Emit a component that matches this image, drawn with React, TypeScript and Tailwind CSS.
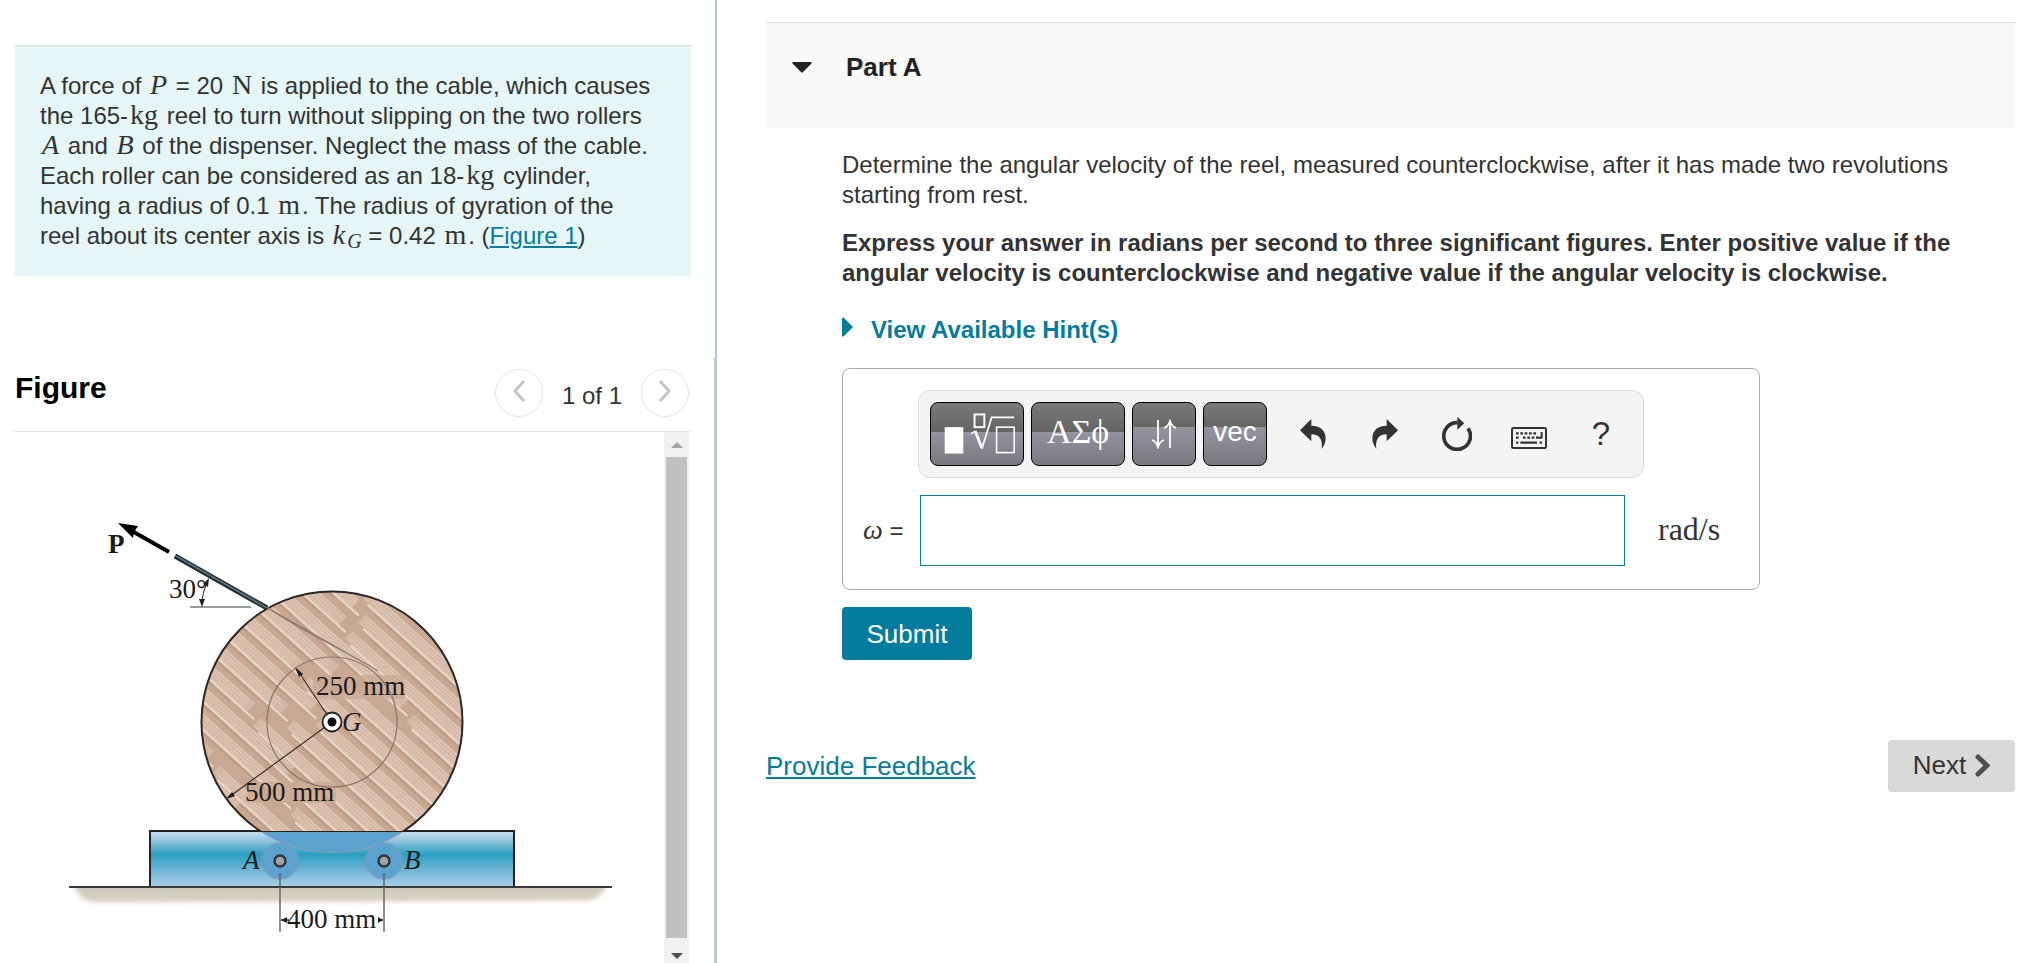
import React from "react";

const serif = "font-['Liberation_Serif',serif]";

function MathText({ children, italic = false }: { children: React.ReactNode; italic?: boolean }) {
  return (
    <span className={`${serif} mx-0.5 text-[28px] leading-none ${italic ? "italic" : ""}`}>{children}</span>
  );
}

type Stripe = { y: number; x1: number; x2: number; w: number; color: string };

function buildStripes(): Stripe[] {
  const stripes: Stripe[] = [];
  let seed = 29;
  const rand = () => {
    seed = (seed * 16807) % 2147483647;
    return seed / 2147483647;
  };
  const addBand = (y: number, start: number, end: number) => {
    stripes.push({ y: y + 5, x1: start, x2: end, w: 11, color: "#d5b8a5" });
    for (let k = 1; k < 11; k += 3) {
      const shift = rand() * 14;
      stripes.push({ y: y + k, x1: start + shift, x2: end - shift, w: 1, color: "#e0c9b9" });
    }
    stripes.push({ y: y + 12, x1: start + 8, x2: end + 10, w: 2, color: "#ecdacd" });
    stripes.push({ y: y + 15, x1: start + 20, x2: end - 20, w: 1, color: "#b5947d" });
  };
  for (let y = -130; y < 132; y += 21) {
    const split = -60 + rand() * 120;
    addBand(y, -150, split - 14);
    addBand(y + 7, split, 150);
  }
  return stripes;
}

const stripes = buildStripes();

function ReelFigure() {
  return (
    <svg viewBox="15 432 649 531" className="block w-full" role="img" aria-label="Cable reel on two rollers">
      <defs>
        <linearGradient id="base" x1="0" y1="0" x2="0" y2="1">
          <stop offset="0" stopColor="#c9dff0" />
          <stop offset="0.15" stopColor="#9cc8e0" />
          <stop offset="0.42" stopColor="#2ba0c2" />
          <stop offset="0.7" stopColor="#6fb4d5" />
          <stop offset="1" stopColor="#a9cfe8" />
        </linearGradient>
        <linearGradient id="ground" x1="0" y1="0" x2="0" y2="1">
          <stop offset="0" stopColor="#cbc7b7" />
          <stop offset="0.8" stopColor="#d3cfc0" />
          <stop offset="1" stopColor="#e8e6de" />
        </linearGradient>
        <filter id="soft" x="-5%" y="-50%" width="110%" height="200%">
          <feGaussianBlur stdDeviation="2" />
        </filter>
        <clipPath id="below">
          <rect x="60" y="887" width="570" height="30" />
        </clipPath>
        <clipPath id="disc">
          <circle cx="332" cy="722" r="131" />
        </clipPath>
        <clipPath id="above">
          <rect x="190" y="580" width="290" height="251" />
        </clipPath>
      </defs>

      <g clipPath="url(#below)">
        <path
          d="M72 880 H609 C604 894 596 902 580 901 L100 903 C84 904 78 896 72 880 Z"
          fill="url(#ground)"
          filter="url(#soft)"
        />
      </g>
      <rect x="150" y="831" width="364" height="56" fill="url(#base)" stroke="#222" strokeWidth="2" />
      <path d="M69 887 H612" stroke="#3a3a3a" strokeWidth="2" />

      <path d="M260 831 A131 131 0 0 0 404 831 Z" fill="#5ba3ce" stroke="#8e9bb0" strokeWidth="1" />
      {[280, 384].map((x) => (
        <g key={x}>
          <circle cx={x} cy="861" r="18" fill="#5ba3ce" stroke="#8498b4" strokeWidth="1" />
          <circle cx={x} cy="861" r="5.5" fill="#a3a3a6" stroke="#33333a" strokeWidth="2.4" />
          <path d={`M${x} 873 V932`} stroke="#555" strokeWidth="1.3" />
        </g>
      ))}
      <path d="M150 831 H514" stroke="#222" strokeWidth="2" />

      <g clipPath="url(#above)">
        <circle cx="332" cy="722" r="131" fill="#c9a892" />
        <g clipPath="url(#disc)">
          <g transform="translate(332 722) rotate(42)">
            {stripes.map((s, i) => (
              <path key={i} d={`M${s.x1} ${s.y} H${s.x2}`} stroke={s.color} strokeWidth={s.w} />
            ))}
          </g>
          <path d="M313 675 h92 v24 h-92 z M248 782 h88 v21 h-88 z" fill="#caa993" opacity="0.75" />
        </g>
        <circle cx="332" cy="722" r="130.5" fill="none" stroke="#2c2725" strokeWidth="2" />
      </g>
      <circle cx="332" cy="722" r="65" fill="none" stroke="#8b7667" strokeWidth="1.2" />
      <path d="M268 608 L366 664 M268 608 C300 630 340 648 378 671" stroke="#8b7d6c" strokeWidth="1.2" fill="none" />

      <path d="M332 722 L298 671 M332 722 L229 797" stroke="#3b302b" strokeWidth="1.2" />
      <path d="M295 667 L303 674 L299 677 Z M226 799 L232 792 L235 796 Z" fill="#1d1816" />
      <circle cx="332" cy="722" r="9.5" fill="#fff" stroke="#222" strokeWidth="1.8" />
      <circle cx="332" cy="722" r="4.5" fill="#111" />

      <path d="M175 556 L267 608" stroke="#1f2b31" strokeWidth="5" />
      <path d="M176 556 L267 608" stroke="#56707d" strokeWidth="2" />
      <path d="M169 552 L132 531" stroke="#000" strokeWidth="4" />
      <path d="M118 523 L138 526 L134 532 L133 538 Z" fill="#000" />
      <path d="M190 607 H251" stroke="#777" strokeWidth="1.6" />
      <path d="M208 581 Q202 592 202 605" stroke="#333" strokeWidth="1.1" fill="none" />
      <path d="M209 578 L208 587 L203 584 Z M202 607 L199 599 H205 Z" fill="#222" />

      <path d="M281 920 H289 M378 920 H383" stroke="#333" strokeWidth="1.4" />
      <path d="M281 920 L287 917 V923 Z M383 920 L378 917 V923 Z" fill="#222" />
      <g className="font-['Liberation_Serif',serif]" fill="#1b1b1b" fontSize="27">
        <text x="108" y="553" fontWeight="bold">P</text>
        <text x="169" y="598">30°</text>
        <text x="316" y="695">250 mm</text>
        <text x="342" y="731" fontStyle="italic">G</text>
        <text x="245" y="801">500 mm</text>
        <text x="243" y="869" fontStyle="italic">A</text>
        <text x="404" y="869" fontStyle="italic">B</text>
        <text x="287" y="928">400 mm</text>
      </g>
    </svg>
  );
}

function RoundButton({ label, d }: { label: string; d: string }) {
  return (
    <button
      type="button"
      aria-label={label}
      className="flex size-12 items-center justify-center rounded-full border border-[#e4e4e4] bg-white"
    >
      <svg viewBox="0 0 14 22" className="mb-1 h-[22px] w-[14px]" fill="none" stroke="#c4c4c4" strokeWidth="3">
        <path d={d} />
      </svg>
    </button>
  );
}

const tall =
  "flex h-16 w-[94px] items-center justify-center rounded-lg border border-black bg-[linear-gradient(#7a7a7a_0%,#646464_46%,#9593a1_46%,#7a797e_100%)] text-white";
const small =
  "flex h-16 w-16 items-center justify-center rounded-lg border border-black bg-[linear-gradient(#7a7a7a_0%,#666666_39%,#9593a1_39%,#7a797e_100%)] text-white";
const plain = "flex size-12 items-center justify-center text-[#333]";

function Toolbar() {
  return (
    <div className="flex h-[88px] w-[726px] items-center rounded-xl border border-[#dcdcdc] bg-[#f4f4f4] pb-px pl-[11px]">
      <div className="flex gap-[7px]">
        <button type="button" aria-label="Templates" className={tall}>
          <svg viewBox="0 0 94 64" className="h-16 w-[94px]" fill="none" stroke="#fff">
            <rect x="14" y="25" width="19" height="27" fill="#fff" stroke="none" />
            <rect x="44.5" y="12" width="10" height="13" strokeWidth="2" />
            <path d="M41 32 L45 29" strokeWidth="1.5" />
            <path d="M45 29 L52 46" strokeWidth="3" />
            <path d="M52 47 L62 15 H85" strokeWidth="1.8" />
            <rect x="67" y="25" width="18" height="26" strokeWidth="1.6" />
          </svg>
        </button>
        <button type="button" aria-label="Symbols" className={`${tall} ${serif} pb-1 text-[34px]`}>
          ΑΣϕ
        </button>
        <button type="button" aria-label="Relations" className={small}>
          <svg viewBox="0 0 26 30" className="h-[30px] w-[26px]" fill="none" stroke="#fff" strokeWidth="1.8">
            <path d="M7 1 V27 M1 21 C4 22 6 25 7 28 C8 25 10 22 13 21" />
            <path d="M19 29 V3 M13 9 C16 8 18 5 19 2 C20 5 22 8 25 9" />
          </svg>
        </button>
        <button type="button" aria-label="Vectors" className={`${small} pb-1 text-[28px]`}>
          vec
        </button>
      </div>
      <div className="ml-[22px] flex grow gap-6">
        <button type="button" aria-label="Undo" className={plain}>
          <svg viewBox="0 0 78 90" className="h-[30px] w-[26px]" fill="currentColor">
            <path d="M0 34 L34 0 V20 C62 20 77 36 77 58 C77 72 71 82 65 89 C68 62 60 47 34 46 V67 Z" />
          </svg>
        </button>
        <button type="button" aria-label="Redo" className={plain}>
          <svg viewBox="0 0 78 90" className="h-[30px] w-[26px]" fill="currentColor">
            <path d="M78 34 L44 0 V20 C16 20 1 36 1 58 C1 72 7 82 13 89 C10 62 18 47 44 46 V67 Z" />
          </svg>
        </button>
        <button type="button" aria-label="Reset" className={plain}>
          <svg viewBox="0 0 90 102" className="h-[34px] w-[30px]" fill="none">
            <path d="M46 17 A40 40 0 1 0 78 34" stroke="currentColor" strokeWidth="11" />
            <path d="M46 0 L67 19 L46 38 Z" fill="currentColor" />
          </svg>
        </button>
        <button type="button" aria-label="Keyboard" className={`${plain} pt-2`}>
          <svg viewBox="0 0 108 66" className="h-[22px] w-[36px]" fill="none" stroke="currentColor">
            <rect x="3" y="3" width="102" height="60" rx="4" strokeWidth="6" />
            <path d="M15 19 H80" strokeWidth="7" strokeDasharray="8 5" />
            <path d="M15 32 H27 M36 32 H82" strokeWidth="7" strokeDasharray="8 5" />
            <path d="M80 32 H93 M92 15 V34" strokeWidth="6" />
            <path d="M15 47 H22 M28 47 H78 M86 47 H93" strokeWidth="7" />
          </svg>
        </button>
        <button type="button" aria-label="Help" className={`${plain} text-[33px]`}>
          ?
        </button>
      </div>
    </div>
  );
}

export default function App() {
  return (
    <div className="grid h-screen grid-cols-[717fr_1311fr] overflow-hidden bg-white font-['Liberation_Sans',Arial,sans-serif] text-2xl leading-[30px] text-[#333]">
      <aside className="flex h-screen min-w-0 flex-col">
        <section className="h-[358px] shrink-0 border-r-2 border-[#b9cbdf] pt-[45px] pr-6 pl-[15px]">
          <p className="h-[231px] border-t border-[#d9dede] bg-[#e6f6f6] py-[25px] pr-8 pl-[25px]">
            A force of <MathText italic>P</MathText> = 20 <MathText>N</MathText> is applied to the cable, which causes
            the 165-<MathText>kg</MathText> reel to turn without slipping on the two rollers{" "}
            <MathText italic>A</MathText> and <MathText italic>B</MathText> of the dispenser. Neglect the mass of the
            cable. Each roller can be considered as an 18-<MathText>kg</MathText> cylinder, having a radius of 0.1{" "}
            <MathText>m</MathText>. The radius of gyration of the reel about its center axis is{" "}
            <MathText italic>k</MathText>
            <span className={`${serif} relative top-1 text-xl leading-none italic`}>G</span> = 0.42{" "}
            <MathText>m</MathText>. (
            <a href="#figure" className="text-[#047c9e] underline">
              Figure 1
            </a>
            )
          </p>
        </section>

        <section id="figure" className="flex min-h-0 grow flex-col border-r-[3px] border-[#b9cbdf] pr-[25px] pl-[15px]">
          <header className="flex h-[74px] shrink-0 items-start justify-between border-b border-[#dcdcdc]">
            <h2 className="pt-[15px] text-[30px] font-bold text-black">Figure</h2>
            <div className="flex items-center gap-[19px] pt-[11px]">
              <RoundButton label="Previous figure" d="M12 1 L3 11 L12 21" />
              <span className="pt-[6px]">1 of 1</span>
              <RoundButton label="Next figure" d="M2 1 L11 11 L2 21" />
            </div>
          </header>
          <div className="flex min-h-0 grow">
            <div className="min-w-0 grow overflow-hidden">
              <ReelFigure />
            </div>
            <div className="flex w-[25px] shrink-0 flex-col items-center bg-[#f1f1f1]">
              <svg viewBox="0 0 12 6" className="mt-[10px] h-[6px] w-3">
                <path d="M0 6 L6 0 L12 6 Z" fill="#a3a3a3" />
              </svg>
              <div className="mt-[9px] mb-[15px] w-[21px] grow bg-[#c1c1c1]" />
              <svg viewBox="0 0 12 6" className="mb-1 h-[6px] w-3 shrink-0">
                <path d="M0 0 L6 6 L12 0 Z" fill="#505050" />
              </svg>
            </div>
          </div>
        </section>
      </aside>

      <main className="min-w-0 pt-[22px] pr-[13px] pl-[49px]">
        <header className="flex h-[107px] items-start border-t border-[#dcdcdc] bg-[#f9f9f9] pt-[29px] pl-[26px]">
          <button type="button" aria-label="Collapse Part A" className="flex h-[30px] items-center">
            <svg viewBox="0 0 20 11" className="h-[11px] w-5">
              <path d="M1 0 H19 L20 1 L11 10 Q10 11 9 10 L0 1 Z" fill="#222" />
            </svg>
          </button>
          <h2 className="ml-[34px] text-[26px] font-bold text-[#222]">Part A</h2>
        </header>

        <div className="pt-[21px] pr-8 pl-[76px]">
          <p>
            Determine the angular velocity of the reel, measured counterclockwise, after it has made two revolutions
            starting from rest.
          </p>
          <p className="mt-[18px] font-bold">
            Express your answer in radians per second to three significant figures. Enter positive value if the angular
            velocity is counterclockwise and negative value if the angular velocity is clockwise.
          </p>
          <button type="button" className="mt-[27px] flex items-center gap-[18px] font-bold text-[#047c9e]">
            <svg viewBox="0 0 11 20" className="mb-[6px] h-5 w-[11px]">
              <path d="M0 1 Q0 0 2 1 L11 10 L2 19 Q0 20 0 19 Z" fill="#047c9e" />
            </svg>
            View Available Hint(s)
          </button>

          <form className="mt-[23px]" onSubmit={(e) => e.preventDefault()}>
            <div className="h-[222px] w-[918px] rounded-lg border border-[#aaa] pt-[21px]">
              <div className="pl-[75px]">
                <Toolbar />
              </div>
              <div className="mt-[17px] flex items-center pl-5">
                <label htmlFor="omega" className="w-[57px] pb-px">
                  <span className={`${serif} text-[28px] italic`}>ω</span> =
                </label>
                <input
                  id="omega"
                  type="text"
                  className="h-[71px] w-[705px] border border-[#047c9e] bg-white px-3 outline-none"
                />
                <span className={`${serif} ml-[33px] pb-[3px] text-[32px]`}>rad/s</span>
              </div>
            </div>
            <button
              type="submit"
              className="mt-[17px] h-[53px] w-[130px] rounded-[4px] bg-[#047c9e] text-[26px] text-white"
            >
              Submit
            </button>
          </form>
        </div>

        <footer className="mt-20 flex h-[52px] items-center justify-between">
          <a href="#feedback" className="text-[26px] text-[#047c9e] underline">
            Provide Feedback
          </a>
          <button
            type="button"
            className="flex h-[52px] w-[127px] items-center justify-center gap-[9px] rounded-[4px] bg-[#d9d9d9] pb-[2px] text-[26px] text-[#333]"
          >
            Next
            <svg viewBox="0 0 15 23" className="h-[23px] w-[15px]" fill="none" stroke="#505050" strokeWidth="5">
              <path d="M3 3 L12 11.5 L3 20" strokeLinecap="round" />
            </svg>
          </button>
        </footer>
      </main>
    </div>
  );
}
